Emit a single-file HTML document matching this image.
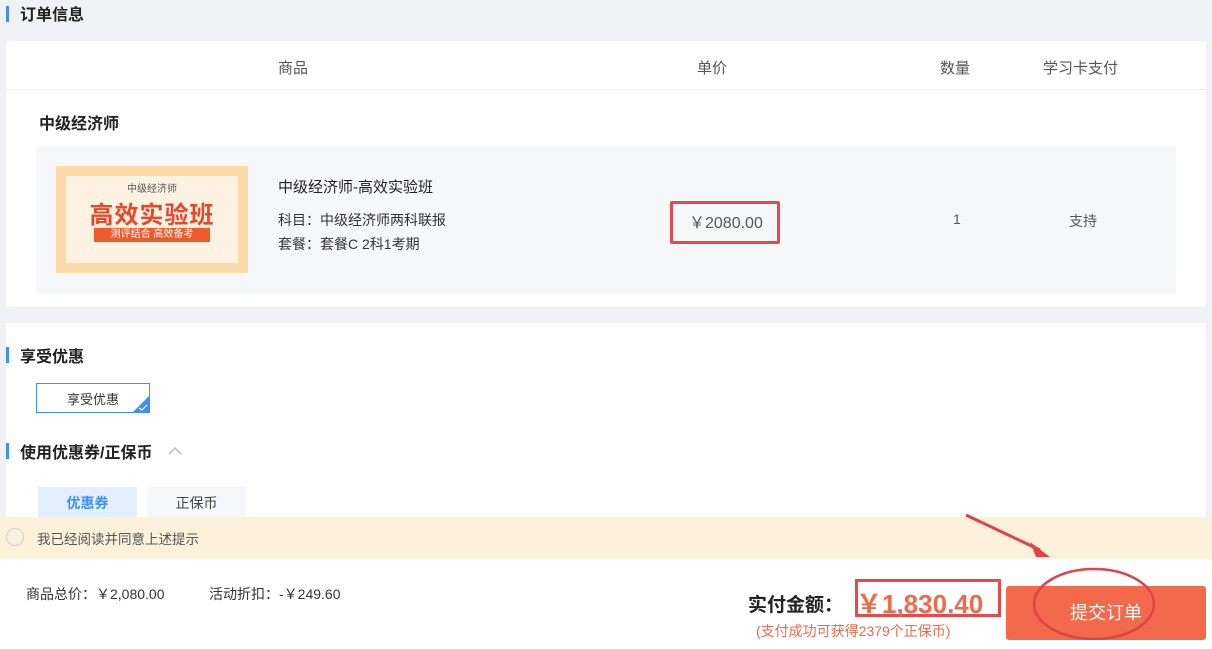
<!DOCTYPE html>
<html><head><meta charset="utf-8"><style>
*{margin:0;padding:0;box-sizing:border-box}
body{width:1212px;height:649px;overflow:hidden;background:#f0f1f4;font-family:"Liberation Sans","Noto Sans CJK SC",sans-serif;color:#333;position:relative;font-size:14px}
.a{position:absolute}
.bar{position:absolute;width:3px;height:16px;background:#3d8ff0}
.h{font-weight:bold;font-size:16px;color:#222}
</style></head><body>
<div class="bar" style="left:6px;top:6px"></div>
<div class="a h" style="left:20px;top:1px">订单信息</div>
<div class="a" style="left:6px;top:41px;width:1200px;height:266px;background:#fff;border-radius:3px"></div>
<div class="a" style="left:6px;top:89px;width:1200px;height:1px;background:#eceef1"></div>
<div class="a" style="left:278px;top:57px;color:#555;font-size:15px">商品</div>
<div class="a" style="left:697px;top:57px;color:#555;font-size:15px">单价</div>
<div class="a" style="left:940px;top:57px;color:#555;font-size:15px">数量</div>
<div class="a" style="left:1043px;top:57px;color:#555;font-size:15px">学习卡支付</div>
<div class="a h" style="left:39px;top:110px">中级经济师</div>
<div class="a" style="left:36px;top:146px;width:1140px;height:148px;background:#f6f7f9"></div>
<div class="a" style="left:56px;top:166px;width:192px;height:107px;background:#fcd9a8"></div>
<div class="a" style="left:66px;top:176px;width:172px;height:87px;background:#fdf1e1"></div>
<div class="a" style="left:56px;top:180px;width:192px;text-align:center;font-size:10px;color:#555">中级经济师</div>
<div class="a" style="left:56px;top:195px;width:192px;text-align:center;font-size:24px;font-weight:bold;color:#e8482a;letter-spacing:1px">高效实验班</div>
<div class="a" style="left:94px;top:228px;width:116px;height:14px;background:#ee5a2c;color:#fff;font-size:10px;text-align:center;line-height:14px">测评结合 高效备考</div>
<div class="a" style="left:278px;top:176px;font-size:15px;color:#222">中级经济师-高效实验班</div>
<div class="a" style="left:278px;top:210px;font-size:14px;color:#333">科目：中级经济师两科联报</div>
<div class="a" style="left:278px;top:234px;font-size:14px;color:#333">套餐：套餐C 2科1考期</div>
<div class="a" style="left:670px;top:201px;width:110px;height:43px;border:3px solid #e5484d;border-radius:2px"></div>
<div class="a" style="left:689px;top:209px;font-size:16px;color:#555">￥2080.00</div>
<div class="a" style="left:953px;top:211px;font-size:14px;color:#555">1</div>
<div class="a" style="left:1069px;top:211px;font-size:14px;color:#555">支持</div>

<div class="a" style="left:6px;top:323px;width:1200px;height:240px;background:#fff"></div>
<div class="bar" style="left:6px;top:347px"></div>
<div class="a h" style="left:20px;top:343px">享受优惠</div>
<div class="a" style="left:36px;top:383px;width:114px;height:30px;border:1px solid #3d8ff0"></div>
<div class="a" style="left:36px;top:389px;width:114px;text-align:center;font-size:13px">享受优惠</div>
<svg class="a" style="left:132px;top:395px" width="18" height="18"><path d="M18 0V18H0Z" fill="#3d8ff0"/><path d="M7 13l3 2 5-5" stroke="#fff" fill="none" stroke-width="1.2"/></svg>
<div class="bar" style="left:6px;top:443px"></div>
<div class="a h" style="left:20px;top:439px">使用优惠券/正保币</div>
<svg class="a" style="left:168px;top:446px" width="14" height="10"><path d="M1 8l6-6 6 6" stroke="#bbb" fill="none" stroke-width="1.5"/></svg>
<div class="a" style="left:38px;top:487px;width:99px;height:33px;background:#e4effd;color:#3d8ff0;font-weight:bold;text-align:center;line-height:33px;font-size:14px">优惠券</div>
<div class="a" style="left:147px;top:487px;width:99px;height:33px;background:#f5f7fa;color:#444;text-align:center;line-height:33px;font-size:14px">正保币</div>

<div class="a" style="left:0;top:517px;width:1212px;height:42px;background:#fdf1dc"></div>
<div class="a" style="left:6px;top:528px;width:18px;height:18px;border:1.5px solid #ccc;border-radius:50%"></div>
<div class="a" style="left:37px;top:528px;font-size:13.5px;color:#555">我已经阅读并同意上述提示</div>

<div class="a" style="left:0;top:559px;width:1212px;height:90px;background:#fff"></div>
<div class="a" style="left:26px;top:584px;font-size:14px;color:#333">商品总价：￥2,080.00</div>
<div class="a" style="left:209px;top:584px;font-size:14px;color:#333">活动折扣：-￥249.60</div>
<div class="a" style="left:748px;top:590px;font-size:19px;font-weight:bold;color:#222">实付金额：</div>
<div class="a" style="left:855px;top:579px;width:146px;height:38px;border:3px solid #e5484d"></div>
<div class="a" style="left:856px;top:584px;font-size:26px;font-weight:bold;color:#ee6a4a">￥1,830.40</div>
<div class="a" style="left:756px;top:621px;font-size:14px;color:#ee6a4a">(支付成功可获得2379个正保币)</div>
<div class="a" style="left:1006px;top:586px;width:200px;height:54px;background:#f26a4b;border-radius:3px;color:#fff;font-size:18px;text-align:center;line-height:54px">提交订单</div>
<svg class="a" style="left:960px;top:510px" width="200" height="130"><ellipse cx="134" cy="94" rx="60" ry="35" fill="none" stroke="#e0424a" stroke-width="2.5"/><path d="M6 5L80 40" stroke="#e0424a" stroke-width="3"/><path d="M70 32L90 47L76 47Z" fill="#e0424a"/></svg>
</body></html>
